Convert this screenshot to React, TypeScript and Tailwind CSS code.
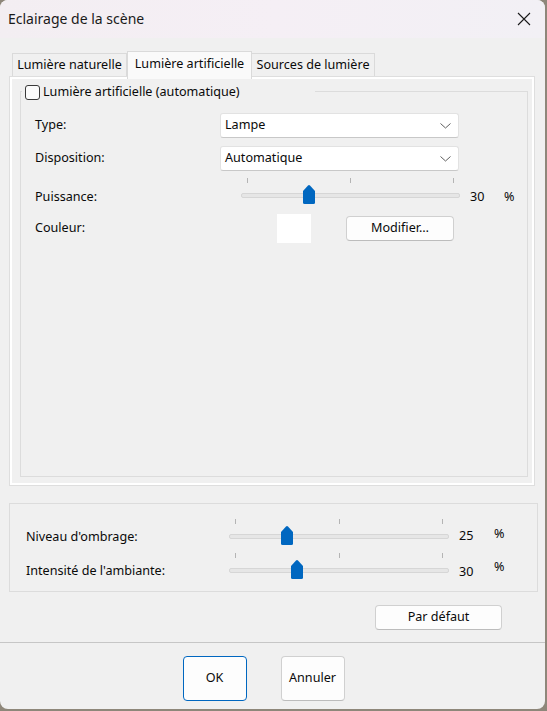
import React from 'react';

const FONT = "font-['Segoe_UI','Noto_Sans','Open_Sans',sans-serif]";

const Chevron = () => (
    <svg width="11" height="6" viewBox="0 0 11 6" className="shrink-0">
        <path d="M0.5 0.5 L5.5 5 L10.5 0.5" fill="none" stroke="#5f5f5f" strokeWidth="1" />
    </svg>
);

const Combo = ({ value }: { value: string }) => (
    <div className="w-[239px] h-[25px] bg-white border border-[#e2e2e2] border-b-[#c8c8c8] rounded-[3px] flex items-center justify-between pl-[4px] pr-[7px]">
        <span>{value}</span>
        <Chevron />
    </div>
);

const Thumb = () => (
    <svg width="14" height="20" viewBox="0 0 14 20">
        <path d="M1 7 L6 1.6 Q7 0.6 8 1.6 L13 7 V18.5 Q13 20 11.5 20 H2.5 Q1 20 1 18.5 Z" fill="#0067c0" />
    </svg>
);

// slider: ticks on top, track under, thumb riding the track
const Slider = ({ value, width }: { value: number; width: number }) => {
    const span = width - 12;
    const left = 6 + (value / 100) * span - 7;
    return (
        <div className="relative h-[27px] shrink-0" style={{ width }}>
            <div className="flex justify-between px-[6px] h-[5px]">
                <span className="w-px h-[5px] bg-[#b4b4b4]" />
                <span className="w-px h-[5px] bg-[#b4b4b4]" />
                <span className="w-px h-[5px] bg-[#b4b4b4]" />
            </div>
            <div className="mt-[10px] h-[5px] bg-[#e6e6e6] border border-[#d6d6d6] rounded-[2px]" />
            <div className="absolute top-[6px]" style={{ left }}>
                <Thumb />
            </div>
        </div>
    );
};

const Button = ({ children, className = '' }: { children: React.ReactNode; className?: string }) => (
    <div className={`bg-[#fdfdfd] border border-[#d0d0d0] border-b-[#bcbcbc] rounded-[4px] flex items-center justify-center ${className}`}>
        {children}
    </div>
);

export default function App() {
    return (
        <div className={`w-[547px] h-[711px] bg-[#8e877a] ${FONT} text-[12.6px] text-[#0a0a0a] leading-none`}>
            <div className="w-[545px] h-[709px] bg-[#f0f0f0] rounded-b-[8px] rounded-t-[8px] overflow-hidden flex flex-col">
                {/* title bar */}
                <div className="h-[38px] shrink-0 flex items-center justify-between pl-[8px] pr-[14px] bg-gradient-to-r from-[#f3eef2] via-[#f5eff5] to-[#f2f0f5]">
                    <span className="text-[14px] text-[#1a1a1a]">Eclairage de la scène</span>
                    <svg width="14" height="14" viewBox="0 0 14 14">
                        <path d="M1 1 L13 13 M13 1 L1 13" stroke="#1a1a1a" strokeWidth="1.1" />
                    </svg>
                </div>

                {/* tabs */}
                <div className="mt-[13px] ml-[12px] h-[25px] flex items-end">
                    <div className="w-[115px] h-[23px] border border-b-0 border-[#dadada] bg-[#f0f0f0] flex items-center justify-center pt-[1px]">
                        Lumière naturelle
                    </div>
                    <div className="relative z-10 w-[125px] h-[28px] -mb-[3px] border border-b-0 border-[#dadada] bg-[#fafafa] flex items-start justify-center pt-[6px]">
                        Lumière artificielle
                    </div>
                    <div className="w-[123px] h-[23px] border border-b-0 border-l-0 border-[#dadada] bg-[#f0f0f0] flex items-center justify-center pt-[1px]">
                        Sources de lumière
                    </div>
                </div>

                {/* tab panel */}
                <div className="ml-[9px] w-[526px] h-[410px] border border-[#dedede]">
                    <div className="h-full border-2 border-white pt-[12px] pl-[8px] pr-[4px]">
                        <div className="relative h-[386px] border border-[#dcdcdc]">
                            <div className="absolute -top-[8px] left-[1px] w-[293px] h-[16px] bg-[#f0f0f0] flex items-center pl-[3px] gap-[3px]">
                                <span className="w-[15px] h-[15px] rounded-[3px] border border-[#3a3a3a] bg-[#fbfbfb]" />
                                <span>Lumière artificielle (automatique)</span>
                            </div>

                            <div className="pl-[14px] pt-[21px] flex flex-col">
                                <div className="flex items-center">
                                    <span className="w-[185px]">Type:</span>
                                    <Combo value="Lampe" />
                                </div>
                                <div className="flex items-center mt-[8px]">
                                    <span className="w-[185px]">Disposition:</span>
                                    <Combo value="Automatique" />
                                </div>
                                <div className="flex items-start mt-[7px]">
                                    <span className="w-[206px] mt-[13px]">Puissance:</span>
                                    <Slider value={30} width={219} />
                                    <span className="ml-[10px] w-[34px] mt-[13px]">30</span>
                                    <span className="mt-[13px]">%</span>
                                </div>
                                <div className="flex items-center mt-[9px]">
                                    <span className="w-[242px]">Couleur:</span>
                                    <div className="w-[34px] h-[29px] bg-white" />
                                    <Button className="ml-[35px] w-[108px] h-[25px]">Modifier…</Button>
                                </div>
                            </div>
                        </div>
                    </div>
                </div>

                {/* lower group */}
                <div className="mt-[17px] ml-[9px] w-[529px] h-[89px] border border-[#dcdcdc] pl-[16px] pt-[15px] flex flex-col gap-[7px]">
                    <div className="flex items-start">
                        <span className="w-[203px] mt-[12px]">Niveau d'ombrage:</span>
                        <Slider value={25} width={220} />
                        <span className="ml-[10px] w-[35px] mt-[11px]">25</span>
                        <span className="mt-[9px]">%</span>
                    </div>
                    <div className="flex items-start">
                        <span className="w-[203px] mt-[12px]">Intensité de l'ambiante:</span>
                        <Slider value={30} width={220} />
                        <span className="ml-[10px] w-[35px] mt-[13px]">30</span>
                        <span className="mt-[8px]">%</span>
                    </div>
                </div>

                <div className="mt-[13px] flex justify-end pr-[43px]">
                    <Button className="w-[127px] h-[25px]">Par défaut</Button>
                </div>

                {/* footer */}
                <div className="mt-[12px] border-t border-[#c6c6c6] flex-1 flex justify-center gap-[34px] pt-[13px] pr-[18px]">
                    <div className="w-[64px] h-[45px] bg-[#fdfdfd] border-[1.5px] border-[#0067c0] rounded-[4px] flex items-center justify-center">
                        OK
                    </div>
                    <Button className="w-[64px] h-[45px]">Annuler</Button>
                </div>
            </div>
        </div>
    );
}
